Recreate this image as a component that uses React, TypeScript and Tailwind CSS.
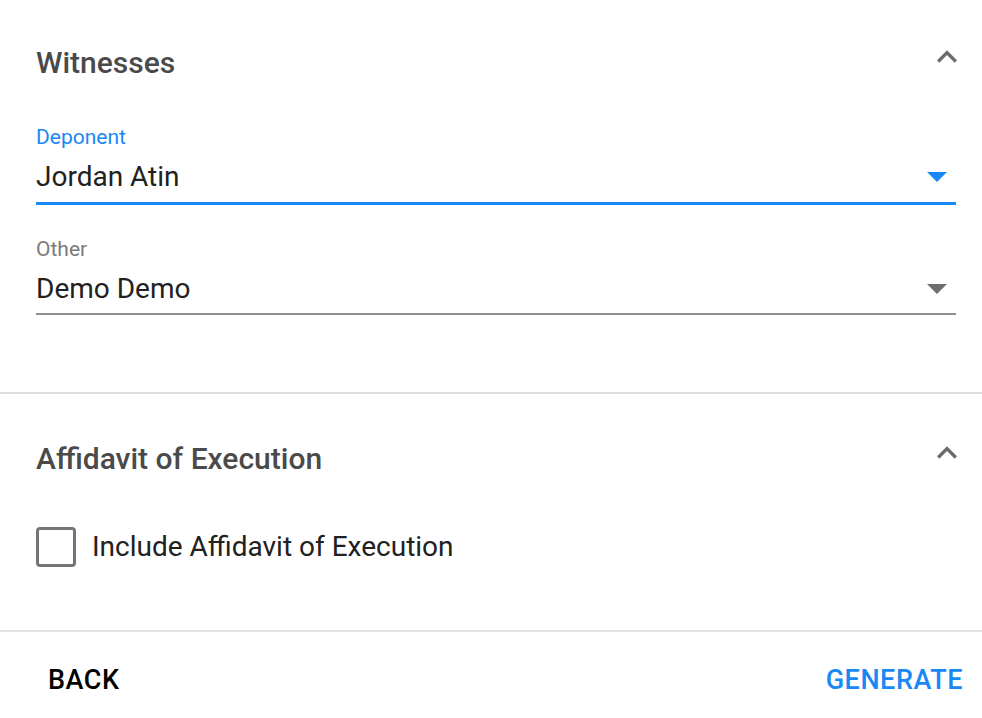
import React from 'react';

function ChevronUp() {
  return (
    <svg width="40" height="40" viewBox="0 0 24 24" className="text-[#6b6b6b] -mr-[11px] mb-[11px]">
      <path d="M12 8l-6 6 1.41 1.41L12 10.83l4.59 4.58L18 14z" fill="currentColor" />
    </svg>
  );
}

function Caret({ color }: { color: string }) {
  return (
    <svg width="20" height="10" viewBox="0 0 20 10">
      <path d="M0 0h20L10 10z" fill={color} />
    </svg>
  );
}

function SelectField({
  label,
  value,
  focused,
}: {
  label: string;
  value: string;
  focused?: boolean;
}) {
  return (
    <div className="flex flex-col">
      <div
        className={
          'text-[21px] leading-[24px] h-[24px] ' +
          (focused ? 'text-[#1a88f4]' : 'text-[#7a7a7a]')
        }
      >
        {label}
      </div>
      <div
        className={
          'flex items-center justify-between pt-[3px] pr-[9px] ' +
          (focused
            ? 'h-[56px] border-b-[3px] border-[#1a88f4]'
            : 'h-[54px] border-b-2 border-[#8f8f8f]')
        }
      >
        <span className="text-[28px] text-[#212121]">{value}</span>
        <Caret color={focused ? '#1a88f4' : '#6e6e6e'} />
      </div>
    </div>
  );
}

export default function App() {
  return (
    <div
      className="w-[982px] h-[718px] bg-white flex flex-col"
      style={{ fontFamily: 'Roboto, "Liberation Sans", sans-serif' }}
    >
      <section className="h-[394px] shrink-0 border-b-2 border-[#dcdcdc] pl-[36px] pr-[26px]">
        <div className="flex items-center justify-between h-[125px]">
          <h2 className="text-[30px] font-medium text-[#4a4a4a]">Witnesses</h2>
          <ChevronUp />
        </div>
        <SelectField label="Deponent" value="Jordan Atin" focused />
        <div className="h-[32px]" />
        <SelectField label="Other" value="Demo Demo" />
      </section>

      <section className="h-[238px] shrink-0 border-b-2 border-[#e2e2e2] pl-[36px] pr-[26px]">
        <div className="flex items-center justify-between h-[128px]">
          <h2 className="text-[30px] font-medium text-[#4a4a4a]">
            Affidavit of Execution
          </h2>
          <ChevronUp />
        </div>
        <label className="flex items-center gap-[16px] h-[50px]">
          <span className="w-[40px] h-[40px] border-[3px] border-[#757575] rounded-[4px]" />
          <span className="text-[28px] text-[#212121]">
            Include Affidavit of Execution
          </span>
        </label>
      </section>

      <footer className="flex items-center justify-between flex-1 pt-[10px] pl-[48px] pr-[19px]">
        <button className="text-[27px] font-medium text-black tracking-[0.02em]">
          BACK
        </button>
        <button className="text-[27px] font-medium text-[#1a88f4] tracking-[0.02em]">
          GENERATE
        </button>
      </footer>
    </div>
  );
}
